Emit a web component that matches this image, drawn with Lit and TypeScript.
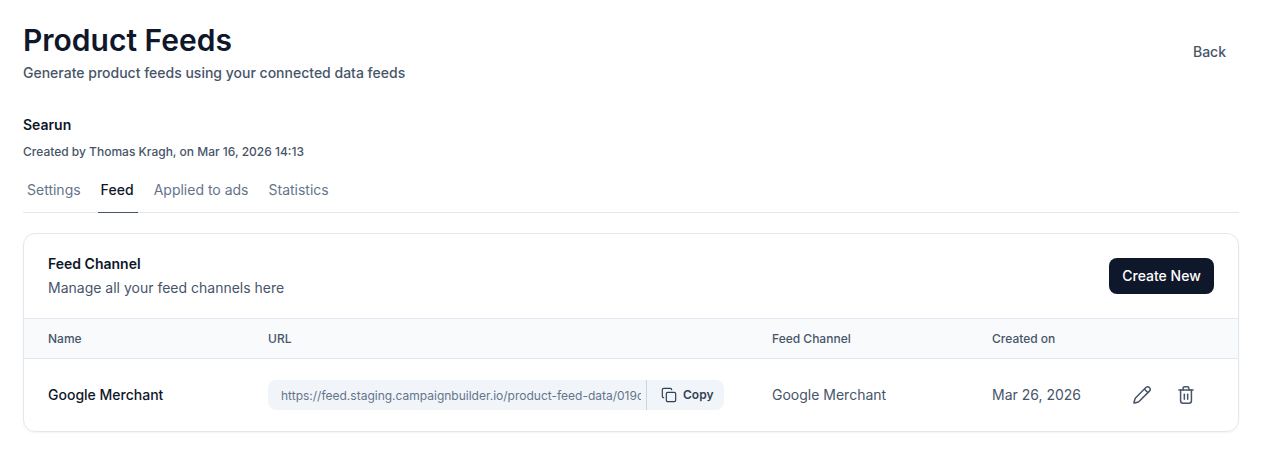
import { LitElement, html, css } from 'lit';
import { customElement } from 'lit/decorators.js';

@customElement('app-root')
export class AppRoot extends LitElement {
  static override styles = css`
    :host {
      display: block;
      min-height: 475px;
      background: #fff;
      color: #0f172a;
      font-family: Inter, 'Noto Sans', sans-serif;
    }

    .page {
      padding: 20px 26px 0 23px;
    }

    .page-head {
      display: flex;
      justify-content: space-between;
      align-items: flex-start;
    }

    h1 {
      margin: 0;
      font-size: 30px;
      line-height: 40px;
      font-weight: 600;
    }

    .subtitle {
      margin: 2px 0 0;
      font-size: 14px;
      line-height: 22px;
      font-weight: 500;
      color: #475569;
    }

    .back {
      margin: 11px 0 0;
      padding: 0 13px 0 14px;
      height: 40px;
      border: none;
      background: none;
      font: 500 14px Inter, sans-serif;
      color: #475569;
    }

    .feed-name {
      margin-top: 31px;
      font-size: 14px;
      line-height: 20px;
      font-weight: 600;
    }

    .feed-meta {
      margin-top: 9px;
      font-size: 12px;
      line-height: 16px;
      font-weight: 500;
      color: #475569;
    }

    .tabs {
      display: flex;
      gap: 12px;
      margin-top: 10px;
      height: 42px;
      border-bottom: 1px solid #e2e8f0;
    }

    .tab {
      padding: 9px 4px 0;
      font-size: 14px;
      line-height: 22px;
      color: #64748b;
      border-bottom: 1px solid transparent;
      margin-bottom: -1px;
    }

    .tab.active {
      margin-left: 1px;
      padding-left: 3px;
      letter-spacing: 0.05px;
      color: #0f172a;
      font-weight: 500;
      border-bottom-color: #475569;
    }

    .card {
      margin-top: 20px;
      border: 1px solid #e2e8f0;
      border-radius: 12px;
      box-shadow: 0 1px 2px rgba(15, 23, 42, 0.05);
      overflow: hidden;
    }

    .card-head {
      display: flex;
      justify-content: space-between;
      align-items: center;
      height: 84px;
      padding: 0 24px;
    }

    .card-title {
      font-size: 14px;
      line-height: 20px;
      font-weight: 600;
    }

    .card-sub {
      margin-top: 4px;
      font-size: 14px;
      line-height: 20px;
      color: #475569;
    }

    .create {
      width: 105px;
      height: 36px;
      padding: 0 0 2px;
      border: none;
      border-radius: 8px;
      background: #0f172a;
      color: #fff;
      font: 500 14px Inter, sans-serif;
    }

    .row {
      display: grid;
      grid-template-columns: 220px 504px 220px 140px 1fr;
      align-items: center;
      padding-left: 24px;
    }

    .row.header {
      height: 39px;
      background: #f8fafc;
      border-top: 1px solid #e2e8f0;
      border-bottom: 1px solid #e2e8f0;
      font-size: 12px;
      font-weight: 500;
      color: #475569;
    }

    .row.body {
      height: 72px;
      font-size: 14px;
      color: #475569;
    }

    .cell {
      padding-bottom: 2px;
    }

    .name {
      font-weight: 500;
      color: #0f172a;
    }

    .url-pill {
      display: flex;
      align-items: stretch;
      width: 456px;
      height: 30px;
      border-radius: 8px;
      background: #f1f5f9;
    }

    .url {
      width: 360px;
      margin: 0 5px 0 13px;
      overflow: hidden;
      white-space: nowrap;
      font-size: 12px;
      line-height: 32px;
      color: #64748b;
    }

    .copy {
      display: flex;
      align-items: center;
      gap: 6px;
      padding-left: 14px;
      border-left: 1px solid #cbd5e1;
      font-size: 12px;
      font-weight: 600;
      color: #334155;
    }

    .copy span {
      padding-bottom: 2px;
    }

    .copy svg {
      width: 16px;
      height: 16px;
      stroke: #334155;
      stroke-width: 1.8;
    }

    .actions {
      display: flex;
      align-items: center;
      gap: 24px;
    }

    .actions svg {
      width: 20px;
      height: 20px;
      stroke: #475569;
      stroke-width: 1.8;
    }

    svg {
      fill: none;
      stroke-width: 1.5;
      stroke-linecap: round;
      stroke-linejoin: round;
      display: block;
    }
  `;

  override render() {
    return html`
      <div class="page">
        <div class="page-head">
          <div>
            <h1>Product Feeds</h1>
            <p class="subtitle">Generate product feeds using your connected data feeds</p>
          </div>
          <button class="back">Back</button>
        </div>

        <div class="feed-name">Searun</div>
        <div class="feed-meta">Created by Thomas Kragh, on Mar 16, 2026 14:13</div>

        <div class="tabs">
          <div class="tab">Settings</div>
          <div class="tab active">Feed</div>
          <div class="tab">Applied to ads</div>
          <div class="tab">Statistics</div>
        </div>

        <div class="card">
          <div class="card-head">
            <div>
              <div class="card-title">Feed Channel</div>
              <div class="card-sub">Manage all your feed channels here</div>
            </div>
            <button class="create">Create New</button>
          </div>

          <div class="row header">
            <div>Name</div>
            <div>URL</div>
            <div>Feed Channel</div>
            <div>Created on</div>
            <div></div>
          </div>

          <div class="row body">
            <div class="cell name">Google Merchant</div>
            <div class="url-pill">
              <div class="url">https://feed.staging.campaignbuilder.io/product-feed-data/019d2a7c-41f0-7b3e</div>
              <div class="copy">
                <svg viewBox="0 0 24 24">
                  <rect x="8" y="8" width="14" height="14" rx="2"></rect>
                  <path d="M4 16c-1.1 0-2-.9-2-2V4c0-1.1.9-2 2-2h10c1.1 0 2 .9 2 2"></path>
                </svg>
                <span>Copy</span>
              </div>
            </div>
            <div class="cell">Google Merchant</div>
            <div class="cell">Mar 26, 2026</div>
            <div class="actions">
              <svg viewBox="0 0 24 24">
                <path d="M20.9 3.1a3 3 0 0 0-4.24 0L4.2 15.6a2 2 0 0 0-.5.85L2.3 21a.55.55 0 0 0 .7.7l4.55-1.4a2 2 0 0 0 .85-.5L20.9 7.34a3 3 0 0 0 0-4.24z"></path>
                <path d="m15 5 4 4"></path>
              </svg>
              <svg viewBox="0 0 24 24">
                <path d="M3.5 6h17"></path>
                <path d="M18.5 6v13a3 3 0 0 1-3 3h-7a3 3 0 0 1-3-3V6"></path>
                <path d="M8.5 6V4a2 2 0 0 1 2-2h3a2 2 0 0 1 2 2v2"></path>
                <path d="M10 11v6"></path>
                <path d="M14 11v6"></path>
              </svg>
            </div>
          </div>
        </div>
      </div>
    `;
  }
}
